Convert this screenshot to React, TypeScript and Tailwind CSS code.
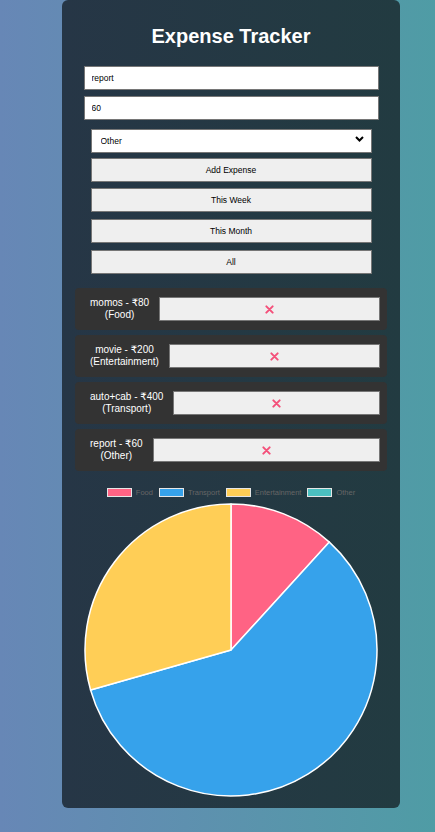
import React from "react";

const expenses = [
  { name: "momos", amount: 80, category: "Food" },
  { name: "movie", amount: 200, category: "Entertainment" },
  { name: "auto+cab", amount: 400, category: "Transport" },
  { name: "report", amount: 60, category: "Other" },
];

// chart data as it was last drawn (Other not updated yet)
const chartData = [
  { label: "Food", value: 80, color: "#ff6384" },
  { label: "Transport", value: 400, color: "#36a2eb" },
  { label: "Entertainment", value: 200, color: "#ffce56" },
  { label: "Other", value: 0, color: "#4bc0c0" },
];

const PieChart = () => {
  const size = 296;
  const cx = size / 2;
  const cy = size / 2;
  const r = 146;
  const total = chartData.reduce((s, d) => s + d.value, 0);
  let start = 0;
  const slices = chartData
    .filter((d) => d.value > 0)
    .map((d) => {
      const angle = (d.value / total) * Math.PI * 2;
      const end = start + angle;
      const x1 = cx + r * Math.sin(start);
      const y1 = cy - r * Math.cos(start);
      const x2 = cx + r * Math.sin(end);
      const y2 = cy - r * Math.cos(end);
      const large = angle > Math.PI ? 1 : 0;
      const path = `M ${cx} ${cy} L ${x1} ${y1} A ${r} ${r} 0 ${large} 1 ${x2} ${y2} Z`;
      start = end;
      return { path, color: d.color, label: d.label };
    });

  return (
    <svg width={size} height={size} viewBox={`0 0 ${size} ${size}`}>
      {slices.map((s) => (
        <path key={s.label} d={s.path} fill={s.color} stroke="#ffffff" strokeWidth={1.5} strokeLinejoin="round" />
      ))}
    </svg>
  );
};

const DeleteIcon = () => (
  <svg width="9" height="9" viewBox="0 0 10 10">
    <path d="M1.5 1.5 L8.5 8.5 M8.5 1.5 L1.5 8.5" stroke="#f4507a" strokeWidth="2.2" strokeLinecap="round" />
  </svg>
);

const App = () => {
  return (
    <div
      className="w-full h-[832px] bg-gradient-to-r from-[#6787b6] to-[#4f9ca5] overflow-hidden"
      style={{ fontFamily: '"Liberation Sans", Arial, "DejaVu Sans", sans-serif' }}
    >
      <div className="ml-[62px] w-[338px] h-[808px] rounded-[6px] bg-gradient-to-r from-[#263646] to-[#223b41] pt-[24px] flex flex-col items-center">
        <h2 className="text-white text-[20px] font-bold leading-[24px] mb-[18px]">Expense Tracker</h2>

        <input
          className="w-[295px] h-[24px] bg-white border border-[#767676] px-[7px] text-[8.5px] text-black mb-[6px] outline-none"
          defaultValue="report"
        />
        <input
          className="w-[295px] h-[24px] bg-white border border-[#767676] px-[7px] text-[8.5px] text-black mb-[7px] outline-none"
          defaultValue="60"
        />

        <div className="relative w-[281px] h-[24px] mb-[7px]">
          <select
            className="w-full h-full appearance-none bg-white border border-[#767676] px-[9px] text-[8.5px] text-black outline-none"
            defaultValue="Other"
          >
            <option>Food</option>
            <option>Transport</option>
            <option>Entertainment</option>
            <option>Other</option>
          </select>
          <svg className="absolute right-[8px] top-[9px] pointer-events-none" width="9" height="6" viewBox="0 0 9 6">
            <path d="M1 1 L4.5 4.5 L8 1" stroke="#000" strokeWidth="2" fill="none" />
          </svg>
        </div>

        {["Add Expense", "This Week", "This Month", "All"].map((label, i) => (
          <button
            key={label}
            className={`w-[281px] h-[24px] bg-[#efefef] border border-[#767676] text-[8.5px] text-black ${
              i === 3 ? "mb-[14px]" : i === 0 ? "mb-[6px]" : "mb-[7px]"
            }`}
          >
            {label}
          </button>
        ))}

        <ul className="w-[312px] flex flex-col gap-[5px]">
          {expenses.map((e) => (
            <li
              key={e.name}
              className="h-[42px] bg-[#333333] rounded-[4px] flex items-center pl-[15px] pr-[7px] gap-[10px]"
            >
              <span className="text-white text-[10px] leading-[12px] text-center">
                {e.name} - ₹{e.amount}
                <br />({e.category})
              </span>
              <button className="flex-1 h-[24px] bg-[#efefef] border border-[#767676] flex items-center justify-center">
                <DeleteIcon />
              </button>
            </li>
          ))}
        </ul>

        <div className="flex items-center mt-[16px] mb-[4px] text-[7.5px] text-[#666666]">
          {chartData.map((d, i) => (
            <div key={d.label} className={`flex items-center ${i < 3 ? "mr-[6px]" : ""}`}>
              <span
                className="inline-block w-[25px] h-[9px] border border-[#e6e6e6] mr-[4px]"
                style={{ backgroundColor: d.color }}
              />
              <span>{d.label}</span>
            </div>
          ))}
        </div>

        <PieChart />
      </div>
    </div>
  );
};

export default App;
